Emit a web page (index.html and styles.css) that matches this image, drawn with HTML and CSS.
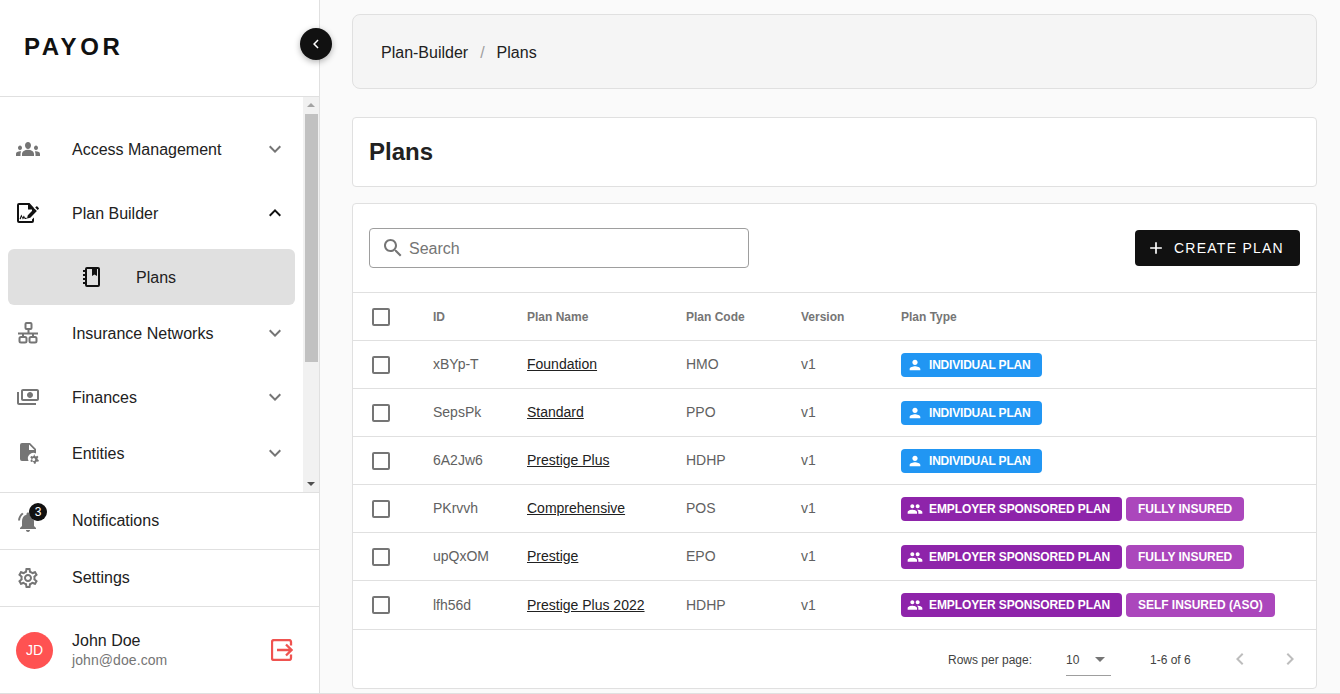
FILE: index.html
```html
<!DOCTYPE html>
<html lang="en">
<head>
<meta charset="utf-8">
<title>Plans</title>
<link rel="stylesheet" href="styles.css">
</head>
<body>
<div class="app">
  <aside class="sidebar">
    <div class="brand"><span class="logo">PAYOR</span></div>
    <button class="collapse" aria-label="Collapse"><svg viewBox="0 0 24 24" class="i18"><path fill="#fff" d="M15.41 7.41L14 6l-6 6 6 6 1.41-1.41L10.83 12z"/></svg></button>
    <div class="menu-wrap">
      <nav class="menu">
        <div class="item gap">
          <svg viewBox="0 0 24 24" class="icon grey"><path transform="matrix(1 0 0 1.15 0 -1.8)" d="M12 12.75c1.63 0 3.07.39 4.24.9 1.08.48 1.76 1.56 1.76 2.73V18H6v-1.61c0-1.18.68-2.26 1.76-2.73 1.17-.52 2.61-.91 4.24-.91zM4 13c1.1 0 2-.9 2-2s-.9-2-2-2-2 .9-2 2 .9 2 2 2zm1.13 1.1c-.37-.06-.74-.1-1.13-.1-.99 0-1.93.21-2.78.58C.48 14.9 0 15.62 0 16.43V18h4.5v-1.61c0-.83.23-1.61.63-2.29zM20 13c1.1 0 2-.9 2-2s-.9-2-2-2-2 .9-2 2 .9 2 2 2zm4 3.43c0-.81-.48-1.53-1.22-1.85-.85-.37-1.79-.58-2.78-.58-.39 0-.76.04-1.13.1.4.68.63 1.46.63 2.29V18H24v-1.57zM12 6c1.66 0 3 1.34 3 3s-1.34 3-3 3-3-1.34-3-3 1.34-3 3-3z"/></svg>
          <span class="label">Access Management</span>
          <svg viewBox="0 0 24 24" class="chev grey"><path d="M16.59 8.59L12 13.17 7.41 8.59 6 10l6 6 6-6z"/></svg>
        </div>
        <div class="item gap">
          <svg viewBox="0 0 24 24" class="icon dark"><path d="M3 2h10.5l4.5 5v2.5l-2 2V8.5h-4V4H3v16h13v-1.5l2-2V20a2 2 0 0 1-2 2H3a2 2 0 0 1-2-2V4a2 2 0 0 1 2-2z"/><path d="M3.5 18l1.8-4.4 1.4 2.8 1.2-2 1.1 2.4h1.6v1.2H8.7l-.6-1.3-1.2 1.9-1.3-2.8-.9 2.4z"/><path d="M11 17.4l.8-3.2 6.6-6.6 2.5 2.5-6.6 6.6zM19.2 6.6l1-1a.9.9 0 0 1 1.2 0l1.3 1.3a.9.9 0 0 1 0 1.2l-1 1z"/></svg>
          <span class="label">Plan Builder</span>
          <svg viewBox="0 0 24 24" class="chev dark"><path d="M12 8l-6 6 1.41 1.41L12 10.83l4.59 4.58L18 14z"/></svg>
        </div>
        <div class="item sub">
          <svg viewBox="0 0 24 24" class="icon dark"><path d="M7 2h11a2 2 0 0 1 2 2v16a2 2 0 0 1-2 2H7a2 2 0 0 1-2-2v-1H3v-2h2v-2H3v-2h2v-2H3V9h2V7H3V5h2V4a2 2 0 0 1 2-2zm0 2v16h11V4h-1v7l-2.5-1.6L12 11V4z"/></svg>
          <span class="label">Plans</span>
        </div>
        <div class="item gap">
          <svg viewBox="0 0 24 24" class="icon outline"><rect x="9.5" y="2" width="6" height="6" rx="1"/><rect x="3.5" y="16" width="7" height="5.5" rx="1.5"/><rect x="13.5" y="16" width="7" height="5.5" rx="1.5"/><path d="M2 12.5h20M12.5 8v4.5M7 12.5V16M17 12.5V16"/></svg>
          <span class="label">Insurance Networks</span>
          <svg viewBox="0 0 24 24" class="chev grey"><path d="M16.59 8.59L12 13.17 7.41 8.59 6 10l6 6 6-6z"/></svg>
        </div>
        <div class="item">
          <svg viewBox="0 0 24 24" class="icon grey"><g transform="matrix(-1 0 0 1 24 0)"><path d="M19 14V6c0-1.1-.9-2-2-2H3c-1.1 0-2 .9-2 2v8c0 1.1.9 2 2 2h14c1.1 0 2-.9 2-2zm-2 0H3V6h14v8zm-7-7c-1.66 0-3 1.34-3 3s1.34 3 3 3 3-1.34 3-3-1.34-3-3-3zm13 0v11c0 1.1-.9 2-2 2H4v-2h17V7h2z"/></g></svg>
          <span class="label">Finances</span>
          <svg viewBox="0 0 24 24" class="chev grey"><path d="M16.59 8.59L12 13.17 7.41 8.59 6 10l6 6 6-6z"/></svg>
        </div>
        <div class="item">
          <svg viewBox="0 0 24 24" class="icon grey"><path d="M6 2h8l6 6v4.5a5.5 5.5 0 0 0-7.4 7.5H6a2 2 0 0 1-2-2V4a2 2 0 0 1 2-2zm7 1.5V9h5.5z"/><path d="M18.5 13.5l.4 1.5 1.1.5 1.4-.7 1 1.2-.9 1.2.1 1.1 1.3.9-.6 1.5-1.5-.3-.9.8-.3 1.5h-1.6l-.4-1.5-1-.6-1.5.5-.8-1.4 1.1-1 0-1.2-1.1-1 .8-1.4 1.5.5 1-.6.4-1.5zm-.8 3.6a1.5 1.5 0 1 0 0 3 1.5 1.5 0 0 0 0-3z" fill-rule="evenodd"/></svg>
          <span class="label">Entities</span>
          <svg viewBox="0 0 24 24" class="chev grey"><path d="M16.59 8.59L12 13.17 7.41 8.59 6 10l6 6 6-6z"/></svg>
        </div>
      </nav>
      <div class="scrollbar">
        <span class="arrow-up"></span>
        <span class="thumb"></span>
        <span class="arrow-down"></span>
      </div>
    </div>
    <div class="foot-item">
      <span class="bell">
        <svg viewBox="0 0 24 24" class="icon grey"><path d="M7.58 4.08L6.15 2.65C3.75 4.48 2.17 7.3 2.03 10.5h2c.15-2.65 1.51-4.97 3.55-6.42zm12.39 6.42h2c-.15-3.2-1.73-6.02-4.12-7.85l-1.42 1.43c2.02 1.45 3.39 3.77 3.54 6.42zM18 11c0-3.07-1.64-5.64-4.5-6.32V4c0-.83-.67-1.5-1.5-1.5s-1.5.67-1.5 1.5v.68C7.63 5.36 6 7.92 6 11v5l-2 2v1h16v-1l-2-2v-5zm-6 11c.14 0 .27-.01.4-.04.65-.14 1.18-.58 1.44-1.18.1-.24.15-.5.15-.78h-4c.01 1.1.9 2 2.01 2z"/></svg>
        <span class="badge">3</span>
      </span>
      <span class="label">Notifications</span>
    </div>
    <div class="foot-item">
      <svg viewBox="0 0 24 24" class="icon grey"><path d="M19.43 12.98c.04-.32.07-.64.07-.98 0-.34-.03-.66-.07-.98l2.11-1.65c.19-.15.24-.42.12-.64l-2-3.46c-.09-.16-.26-.25-.44-.25-.06 0-.12.01-.17.03l-2.49 1c-.52-.4-1.08-.73-1.69-.98l-.38-2.65C14.46 2.18 14.25 2 14 2h-4c-.25 0-.46.18-.49.42l-.38 2.65c-.61.25-1.17.59-1.69.98l-2.49-1c-.06-.02-.12-.03-.18-.03-.17 0-.34.09-.43.25l-2 3.46c-.13.22-.07.49.12.64l2.11 1.65c-.04.32-.07.65-.07.98 0 .33.03.66.07.98l-2.11 1.65c-.19.15-.24.42-.12.64l2 3.46c.09.16.26.25.44.25.06 0 .12-.01.17-.03l2.49-1c.52.4 1.08.73 1.69.98l.38 2.65c.03.24.24.42.49.42h4c.25 0 .46-.18.49-.42l.38-2.65c.61-.25 1.17-.59 1.69-.98l2.49 1c.06.02.12.03.18.03.17 0 .34-.09.43-.25l2-3.46c.12-.22.07-.49-.12-.64l-2.11-1.65zm-1.98-1.71c.04.31.05.52.05.73 0 .21-.02.43-.05.73l-.14 1.13.89.7 1.08.84-.7 1.21-1.27-.51-1.04-.42-.9.68c-.43.32-.84.56-1.25.73l-1.06.43-.16 1.13-.2 1.35h-1.4l-.19-1.35-.16-1.13-1.06-.43c-.43-.18-.83-.41-1.23-.71l-.91-.7-1.06.43-1.27.51-.7-1.21 1.08-.84.89-.7-.14-1.13c-.03-.31-.05-.54-.05-.74s.02-.43.05-.73l.14-1.13-.89-.7-1.08-.84.7-1.21 1.27.51 1.04.42.9-.68c.43-.32.84-.56 1.25-.73l1.06-.43.16-1.13.2-1.35h1.39l.19 1.35.16 1.13 1.06.43c.43.18.83.41 1.23.71l.91.7 1.06-.43 1.27-.51.7 1.21-1.07.85-.89.7.14 1.13zM12 8c-2.21 0-4 1.79-4 4s1.79 4 4 4 4-1.79 4-4-1.79-4-4-4zm0 6c-1.1 0-2-.9-2-2s.9-2 2-2 2 .9 2 2-.9 2-2 2z"/></svg>
      <span class="label">Settings</span>
    </div>
    <div class="user">
      <span class="avatar">JD</span>
      <div class="who">
        <span class="name">John Doe</span>
        <span class="email">john@doe.com</span>
      </div>
      <svg viewBox="0 0 22 22" class="logout"><path d="M20 6.5V3a2 2 0 0 0-2-2H3a2 2 0 0 0-2 2v16a2 2 0 0 0 2 2h15a2 2 0 0 0 2-2v-3.5"/><path d="M6 11h14.5M15 5.5l5.5 5.5-5.5 5.5"/></svg>
    </div>
  </aside>
  <main class="main">
    <div class="crumbs"><span>Plan-Builder</span><span class="sep">/</span><span>Plans</span></div>
    <div class="card title-card"><h1>Plans</h1></div>
    <section class="card table-card">
      <div class="toolbar">
        <label class="search">
          <svg viewBox="0 0 24 24" class="search-icon"><path d="M15.5 14h-.79l-.28-.27C15.41 12.59 16 11.11 16 9.5 16 5.91 13.09 3 9.5 3S3 5.91 3 9.5 5.91 16 9.5 16c1.61 0 3.09-.59 4.23-1.57l.27.28v.79l5 4.99L20.49 19l-4.99-5zm-6 0C7.01 14 5 11.99 5 9.5S7.01 5 9.5 5 14 7.01 14 9.5 11.99 14 9.5 14z"/></svg>
          <span>Search</span>
        </label>
        <button class="create"><svg viewBox="0 0 24 24" class="plus"><path d="M19 13h-6v6h-2v-6H5v-2h6V5h2v6h6v2z"/></svg>CREATE PLAN</button>
      </div>
      <table class="plans">
        <colgroup><col class="c1"><col class="c2"><col class="c3"><col class="c4"><col class="c5"><col></colgroup>
        <thead>
          <tr><th class="check"><span class="box"></span></th><th>ID</th><th>Plan Name</th><th>Plan Code</th><th>Version</th><th>Plan Type</th></tr>
        </thead>
        <tbody>
          <tr><td class="check"><span class="box"></span></td><td>xBYp-T</td><td><a>Foundation</a></td><td>HMO</td><td>v1</td><td class="types"><span class="chip blue"><svg viewBox="0 0 24 24"><path d="M12 12c2.21 0 4-1.79 4-4s-1.79-4-4-4-4 1.79-4 4 1.79 4 4 4zm0 2c-2.67 0-8 1.34-8 4v2h16v-2c0-2.66-5.33-4-8-4z"/></svg>INDIVIDUAL PLAN</span></td></tr>
          <tr><td class="check"><span class="box"></span></td><td>SepsPk</td><td><a>Standard</a></td><td>PPO</td><td>v1</td><td class="types"><span class="chip blue"><svg viewBox="0 0 24 24"><path d="M12 12c2.21 0 4-1.79 4-4s-1.79-4-4-4-4 1.79-4 4 1.79 4 4 4zm0 2c-2.67 0-8 1.34-8 4v2h16v-2c0-2.66-5.33-4-8-4z"/></svg>INDIVIDUAL PLAN</span></td></tr>
          <tr><td class="check"><span class="box"></span></td><td>6A2Jw6</td><td><a>Prestige Plus</a></td><td>HDHP</td><td>v1</td><td class="types"><span class="chip blue"><svg viewBox="0 0 24 24"><path d="M12 12c2.21 0 4-1.79 4-4s-1.79-4-4-4-4 1.79-4 4 1.79 4 4 4zm0 2c-2.67 0-8 1.34-8 4v2h16v-2c0-2.66-5.33-4-8-4z"/></svg>INDIVIDUAL PLAN</span></td></tr>
          <tr><td class="check"><span class="box"></span></td><td>PKrvvh</td><td><a>Comprehensive</a></td><td>POS</td><td>v1</td><td class="types"><span class="chip purple"><svg viewBox="0 0 24 24"><path d="M16 11c1.66 0 2.99-1.34 2.99-3S17.66 5 16 5c-1.66 0-3 1.34-3 3s1.34 3 3 3zm-8 0c1.66 0 2.99-1.34 2.99-3S9.66 5 8 5C6.34 5 5 6.34 5 8s1.34 3 3 3zm0 2c-2.33 0-7 1.17-7 3.5V19h14v-2.5c0-2.33-4.67-3.5-7-3.5zm8 0c-.29 0-.62.02-.97.05 1.16.84 1.97 1.97 1.97 3.45V19h6v-2.5c0-2.33-4.67-3.5-7-3.5z"/></svg>EMPLOYER SPONSORED PLAN</span><span class="chip light">FULLY INSURED</span></td></tr>
          <tr><td class="check"><span class="box"></span></td><td>upQxOM</td><td><a>Prestige</a></td><td>EPO</td><td>v1</td><td class="types"><span class="chip purple"><svg viewBox="0 0 24 24"><path d="M16 11c1.66 0 2.99-1.34 2.99-3S17.66 5 16 5c-1.66 0-3 1.34-3 3s1.34 3 3 3zm-8 0c1.66 0 2.99-1.34 2.99-3S9.66 5 8 5C6.34 5 5 6.34 5 8s1.34 3 3 3zm0 2c-2.33 0-7 1.17-7 3.5V19h14v-2.5c0-2.33-4.67-3.5-7-3.5zm8 0c-.29 0-.62.02-.97.05 1.16.84 1.97 1.97 1.97 3.45V19h6v-2.5c0-2.33-4.67-3.5-7-3.5z"/></svg>EMPLOYER SPONSORED PLAN</span><span class="chip light">FULLY INSURED</span></td></tr>
          <tr class="last"><td class="check"><span class="box"></span></td><td>lfh56d</td><td><a>Prestige Plus 2022</a></td><td>HDHP</td><td>v1</td><td class="types"><span class="chip purple"><svg viewBox="0 0 24 24"><path d="M16 11c1.66 0 2.99-1.34 2.99-3S17.66 5 16 5c-1.66 0-3 1.34-3 3s1.34 3 3 3zm-8 0c1.66 0 2.99-1.34 2.99-3S9.66 5 8 5C6.34 5 5 6.34 5 8s1.34 3 3 3zm0 2c-2.33 0-7 1.17-7 3.5V19h14v-2.5c0-2.33-4.67-3.5-7-3.5zm8 0c-.29 0-.62.02-.97.05 1.16.84 1.97 1.97 1.97 3.45V19h6v-2.5c0-2.33-4.67-3.5-7-3.5z"/></svg>EMPLOYER SPONSORED PLAN</span><span class="chip light">SELF INSURED (ASO)</span></td></tr>
        </tbody>
      </table>
      <div class="pager">
        <span class="rows">Rows per page:</span>
        <span class="select"><span>10</span><i class="caret"></i></span>
        <span class="range">1-6 of 6</span>
        <svg viewBox="0 0 24 24" class="page-btn"><path d="M15.41 7.41L14 6l-6 6 6 6 1.41-1.41L10.83 12z"/></svg>
        <svg viewBox="0 0 24 24" class="page-btn next"><path d="M10 6L8.59 7.41 13.17 12l-4.58 4.59L10 18l6-6z"/></svg>
      </div>
    </section>
  </main>
</div>
</body>
</html>
```
FILE: styles.css
```css
* { box-sizing: border-box; }
html, body { margin: 0; height: 694px; overflow: hidden; }
body { font-family: "Liberation Sans", Arial, sans-serif; color: #212121; background: #fafafa; font-size: 16px; }
.app { display: flex; height: 694px; border-bottom: 1px solid #e0e0e0; }

.sidebar { width: 320px; flex: none; position: relative; display: flex; flex-direction: column; background: #fff; border-right: 1px solid #e0e0e0; }
.brand { height: 97px; flex: none; display: flex; align-items: center; padding: 0 0 2px 24px; border-bottom: 1px solid #e0e0e0; }
.logo { font-size: 24px; font-weight: 700; letter-spacing: 3.6px; color: #111; }
.collapse { position: absolute; left: 300px; top: 28px; width: 32px; height: 32px; padding: 0; border: 0; border-radius: 50%; background: #111; display: flex; align-items: center; justify-content: center; box-shadow: 0 2px 6px rgba(0,0,0,.3); z-index: 2; }
.i18 { width: 18px; height: 18px; }

.menu-wrap { height: 396px; flex: none; display: flex; border-bottom: 1px solid #e0e0e0; }
.menu { flex: 1; padding-top: 24px; min-width: 0; }
.item { height: 56px; display: flex; align-items: center; padding: 0 16px; }
.item .label { padding-top: 2px; }
.item.gap { margin-bottom: 8px; }
.item.sub { margin: 0 8px; padding-left: 72px; background: #e0e0e0; border-radius: 6px; }
.icon { width: 24px; height: 24px; flex: none; margin-right: 32px; }
.label { flex: 1; color: #212121; }
.chev { width: 24px; height: 24px; flex: none; }
.grey { fill: #757575; }
.dark { fill: #111; }
.outline { fill: none; stroke: #757575; stroke-width: 2; }

.scrollbar { width: 16px; flex: none; background: #f1f1f1; display: flex; flex-direction: column; align-items: center; }
.arrow-up { margin-top: 6px; width: 0; height: 0; border: 4px solid transparent; border-top: 0; border-bottom: 4px solid #a3a3a3; }
.thumb { margin-top: 7px; width: 13px; height: 248px; background: #c1c1c1; margin-left: 1px; }
.arrow-down { margin-top: auto; margin-bottom: 6px; width: 0; height: 0; border: 4px solid transparent; border-bottom: 0; border-top: 4px solid #505050; }

.foot-item { height: 57px; flex: none; display: flex; align-items: center; padding-left: 16px; border-bottom: 1px solid #e0e0e0; }
.bell { position: relative; display: flex; width: 24px; height: 24px; margin: 2px 32px 0 0; }
.bell .icon { margin: 0; }
.badge { position: absolute; left: 13px; top: -7px; width: 18px; height: 18px; border-radius: 50%; background: #111; color: #fff; font-size: 12px; line-height: 18px; text-align: center; }
.user { flex: 1; display: flex; align-items: center; padding: 0 26px 0 16px; }
.avatar { width: 37px; height: 37px; border-radius: 50%; background: #ff5252; color: #fff; font-size: 14px; display: flex; align-items: center; justify-content: center; margin-right: 19px; flex: none; }
.who { flex: 1; display: flex; flex-direction: column; margin-top: -2px; }
.name { font-size: 16px; line-height: 22px; color: #212121; margin: 1px 0 -1px; }
.email { font-size: 14px; line-height: 18px; color: #757575; letter-spacing: .08px; }
.logout { width: 22px; height: 22px; flex: none; fill: none; stroke: #ef5350; stroke-width: 2.3; }

.main { flex: 1; min-width: 0; padding: 14px 23px 0 32px; display: flex; flex-direction: column; }
.crumbs { height: 75px; flex: none; background: #f5f5f5; border: 1px solid #e0e0e0; border-radius: 8px; display: flex; align-items: center; padding: 2px 0 0 28px; color: #212121; }
.sep { margin: 0 12px; color: #9e9e9e; }
.card { background: #fff; border: 1px solid #e0e0e0; border-radius: 4px; }
.title-card { height: 70px; flex: none; margin-top: 28px; display: flex; align-items: center; padding-left: 16px; }
h1 { margin: 0; font-size: 24px; font-weight: 700; color: #212121; }
.table-card { height: 486px; flex: none; margin-top: 16px; }
.toolbar { height: 89px; display: flex; align-items: center; justify-content: space-between; padding: 0 16px; border-bottom: 1px solid #e0e0e0; }
.search { width: 380px; height: 40px; display: flex; align-items: center; border: 1px solid #9e9e9e; border-radius: 4px; padding-left: 11px; color: #757575; }
.search span { padding-top: 2px; }
.search-icon { width: 24px; height: 24px; fill: #757575; margin-right: 4px; flex: none; }
.create { width: 165px; height: 36px; border: 0; border-radius: 4px; background: #111; color: #fff; font: inherit; font-size: 14px; letter-spacing: 1.25px; display: flex; align-items: center; padding: 0 0 0 11px; }
.plus { width: 20px; height: 20px; fill: #fff; margin-right: 8px; flex: none; }

.plans { width: 100%; border-collapse: collapse; table-layout: fixed; font-size: 14px; }
.c1 { width: 80px; } .c2 { width: 94px; } .c3 { width: 159px; } .c4 { width: 115px; } .c5 { width: 100px; }
.plans th, .plans td { height: 48px; padding: 0; text-align: left; border-bottom: 1px solid #e0e0e0; vertical-align: middle; white-space: nowrap; }
.plans td { color: #616161; }
.plans th { height: 47px; padding-top: 2px; font-size: 12px; font-weight: 700; color: #757575; }
.plans .last td { height: 49px; }
.plans .check { padding-left: 19px; }
.plans td.check, .plans td.types { padding-top: 2px; }
.plans .last td.check, .plans .last td.types { padding-top: 0; }
.box { display: block; width: 18px; height: 18px; border: 2px solid #757575; border-radius: 2px; }
.plans a { color: #212121; text-decoration: underline; }
.chip { display: inline-flex; align-items: center; height: 24px; border-radius: 4px; color: #fff; font-size: 12px; font-weight: 700; letter-spacing: -.1px; padding: 0 12px; vertical-align: middle; }
.chip svg { width: 16px; height: 16px; fill: #fff; margin: 0 6px 0 -6px; }
.chip + .chip { margin-left: 4px; }
.chip.blue { background: #2196f3; letter-spacing: -.2px; }
.purple { background: #8e24aa; }
.chip.light { background: #ab47bc; letter-spacing: -.04px; }

.pager { height: 58px; display: flex; align-items: center; padding-left: 595px; font-size: 12px; color: #424242; }
.rows { width: 118px; padding-top: 2px; }
.select { width: 45px; height: 34px; display: flex; align-items: center; justify-content: space-between; padding: 2px 6px 0 0; border-bottom: 1px solid #9e9e9e; margin-top: 1px; }
.caret { width: 0; height: 0; border: 5px solid transparent; border-bottom: 0; border-top: 5px solid #757575; }
.range { margin-left: 39px; width: 78px; padding-top: 2px; }
.page-btn { width: 24px; height: 24px; fill: #bdbdbd; flex: none; }
.next { margin-left: 26px; }
```
